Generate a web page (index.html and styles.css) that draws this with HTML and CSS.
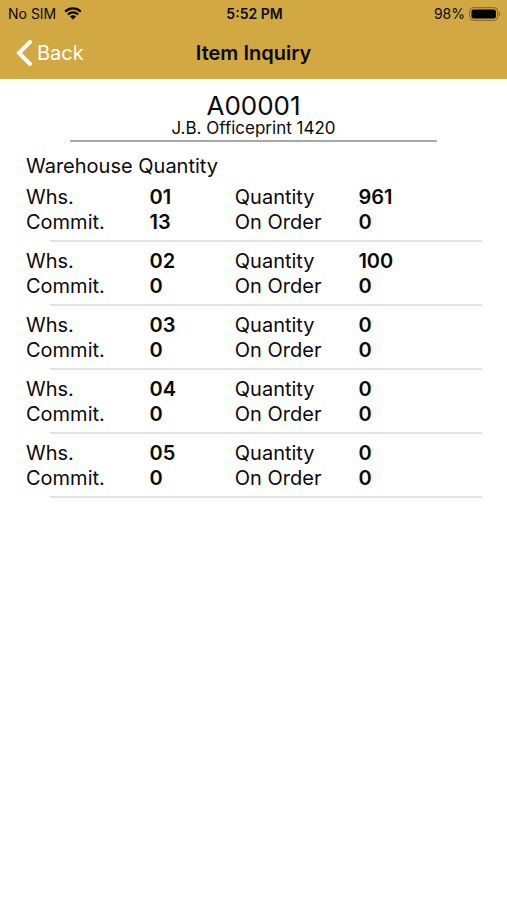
FILE: index.html
```html
<!DOCTYPE html>
<html lang="en">
<head>
<meta charset="utf-8">
<meta name="viewport" content="width=device-width, initial-scale=1">
<title>Item Inquiry</title>
<link rel="stylesheet" href="styles.css">
</head>
<body>
<header class="top">
  <div class="status">
    <div class="carrier"><span>No SIM</span>
      <svg class="wifi" viewBox="0 0 18 13" aria-hidden="true"><path d="M1.2 4.6a11.2 11.2 0 0 1 15.6 0M3.9 7.5a7.3 7.3 0 0 1 10.2 0" fill="none" stroke="currentColor" stroke-width="2.3"/><path d="M9 12.6 5.9 9.5a4.4 4.4 0 0 1 6.2 0z" fill="currentColor"/></svg>
    </div>
    <span class="clock">5:52 PM</span>
    <div class="power"><span>98%</span>
      <svg class="battery" viewBox="0 0 32 14" aria-hidden="true"><rect x=".7" y=".7" width="28" height="12.6" rx="3.5" fill="none" stroke="#80641f"/><rect x="2.5" y="2.5" width="24.4" height="9" rx="2" fill="#000"/><path d="M30 4.9v4.2c1.7-.6 1.7-3.6 0-4.2z" fill="#80641f"/></svg>
    </div>
  </div>
  <nav class="nav">
    <button class="back" type="button"><svg class="chevron" viewBox="0 0 16 28" aria-hidden="true"><path d="M14 3 3 14 14 25" fill="none" stroke="currentColor" stroke-width="4" stroke-linecap="round"/></svg>Back</button>
    <h1 class="title">Item Inquiry</h1>
  </nav>
</header>
<main>
  <section class="item">
    <h2 class="code">A00001</h2>
    <p class="name">J.B. Officeprint 1420</p>
  </section>
  <h3 class="heading">Warehouse Quantity</h3>
  <dl class="stock"><dt>Whs.</dt><dd>01</dd><dt>Quantity</dt><dd>961</dd><dt>Commit.</dt><dd>13</dd><dt>On Order</dt><dd>0</dd></dl>
  <dl class="stock"><dt>Whs.</dt><dd>02</dd><dt>Quantity</dt><dd>100</dd><dt>Commit.</dt><dd>0</dd><dt>On Order</dt><dd>0</dd></dl>
  <dl class="stock"><dt>Whs.</dt><dd>03</dd><dt>Quantity</dt><dd>0</dd><dt>Commit.</dt><dd>0</dd><dt>On Order</dt><dd>0</dd></dl>
  <dl class="stock"><dt>Whs.</dt><dd>04</dd><dt>Quantity</dt><dd>0</dd><dt>Commit.</dt><dd>0</dd><dt>On Order</dt><dd>0</dd></dl>
  <dl class="stock"><dt>Whs.</dt><dd>05</dd><dt>Quantity</dt><dd>0</dd><dt>Commit.</dt><dd>0</dd><dt>On Order</dt><dd>0</dd></dl>
</main>
</body>
</html>
```
FILE: styles.css
```css
* { box-sizing: border-box; margin: 0; padding: 0; }
body { background: #fff; color: #0a0a0a; font: 20px/25px Inter, "Liberation Sans", sans-serif; }
.top { background: #d1a841; }
.status { display: grid; grid-template-columns: 1fr auto 1fr; align-items: center; height: 27px; padding: 0 6px 0 8px; font-size: 14px; line-height: 27px; }
.carrier, .power { display: flex; align-items: center; gap: 8px; }
.power { justify-content: flex-end; gap: 4px; }
.wifi { width: 18px; height: 13px; }
.battery { width: 32px; height: 14px; }
.clock { font-weight: 600; }
.nav { display: grid; grid-template-columns: 1fr auto 1fr; align-items: center; height: 52px; padding: 0 16px; }
.back { display: flex; align-items: center; gap: 5px; border: 0; background: none; color: #fff; font: inherit; justify-self: start; }
.chevron { width: 16px; height: 28px; }
.title { font-size: 20px; font-weight: 600; }
.item { margin: 14px 70px 0; padding-bottom: 3px; border-bottom: 2px solid #a8a8a8; text-align: center; }
.code { font-size: 26px; line-height: 26px; font-weight: 400; }
.name { font-size: 17px; line-height: 18px; }
.heading { margin: 12px 26px 6px; font-size: 20px; font-weight: 400; }
.stock { display: grid; grid-template-columns: 29fr 20fr 29fr 29fr; padding: 0 25px 7px 26px; margin-bottom: 7px; background: linear-gradient(#e2e2e2, #e2e2e2) 50px 100% / calc(100% - 75px) 2px no-repeat; }
.stock dd { font-weight: 600; }
```
